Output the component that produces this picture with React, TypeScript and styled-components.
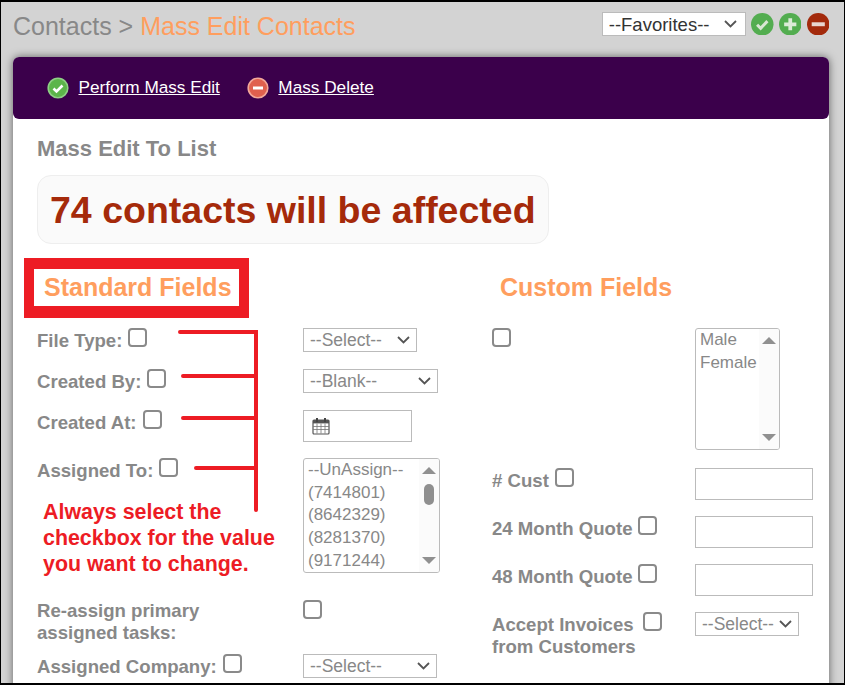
import {createGlobalStyle, styled} from "styled-components";

const chevron = "data:image/svg+xml;utf8,<svg xmlns='http://www.w3.org/2000/svg' width='13' height='8' viewBox='0 0 13 8'><path d='M1 1l5.5 5.5L12 1' fill='none' stroke='%23555' stroke-width='1.8'/></svg>";

const GlobalStyle = createGlobalStyle`
  html, body {
    margin: 0;
    padding: 0;
    height: 100%;
    overflow: hidden;
    background: #d3d3d3;
  }
  * {
    box-sizing: border-box;
  }
`;

const Frame = styled.div`
  width: 845px;
  height: 685px;
  border: solid #000;
  border-width: 2px 1px 2px 1px;
  background: #d3d3d3;
  overflow: hidden;
  font-family: "Liberation Sans", Arial, sans-serif;
  color: #888;
  position: relative;
`;

const TopBar = styled.div`
  height: 55px;
  padding: 8px 15px 0 12px;
  display: flex;
  align-items: flex-start;
  justify-content: space-between;
`;

const Crumb = styled.h1`
  margin: 0;
  font-size: 25px;
  line-height: 32px;
  font-weight: 400;
  color: #888;

  span {
    color: #ff9e5e;
  }
`;

const Favorites = styled.div`
  display: flex;
  align-items: center;
  gap: 5.25px;
  margin-top: 2px;
`;

const NativeSelect = styled.select<{$w: number}>`
  appearance: none;
  display: block;
  width: ${({$w}) => $w}px;
  height: 24px;
  font-family: "Liberation Sans", Arial, sans-serif;
  font-size: 17.5px;
  color: #888;
  background: #fff url("${chevron}") no-repeat right 6px center;
  border: 1px solid #bbb;
  border-radius: 0;
  padding: 0 0 0 6px;
  outline: none;
`;

const FavoritesSelect = styled(NativeSelect)`
  color: #333;
  font-size: 18.5px;
  background-position: right 8px center;
`;

const Card = styled.div`
  margin: 0 15px 0 12px;
  height: 640px;
  background: #fff;
  border-radius: 6px 6px 0 0;
  box-shadow: 0 0 8px rgba(0, 0, 0, 0.55);
`;

const ActionBar = styled.div`
  height: 62px;
  background: #3b004b;
  border-radius: 6px;
  display: flex;
  align-items: center;
  padding-left: 34px;
  gap: 27px;
`;

const Action = styled.a`
  display: flex;
  align-items: center;
  gap: 9.5px;
  color: #fff;
  font-size: 17.2px;
`;

const ActionLabel = styled.span`
  margin-bottom: 2px;
  text-decoration: underline;
`;

const Body = styled.div`
  padding: 18px 16px 0 24px;
`;

const SectionTitle = styled.h2`
  margin: 0;
  font-size: 22px;
  line-height: 24px;
  font-weight: 700;
  color: #888;
`;

const AffectedBox = styled.div`
  margin-top: 14px;
  width: 512px;
  height: 69px;
  border: 1px solid #eee;
  border-radius: 14px;
  background: #fafafa;
  padding-left: 12px;
  font-size: 37.5px;
  line-height: 68px;
  font-weight: 700;
  color: #a52a0a;
  white-space: nowrap;
`;

const Columns = styled.div`
  display: flex;
  margin-top: 28px;
`;

const LeftColumn = styled.div`
  width: 455px;
`;

const RightColumn = styled.div`
  flex: 1;
`;

const FieldsTitle = styled.h3`
  margin: 0 0 26px 7px;
  height: 30px;
  font-size: 25px;
  line-height: 30px;
  font-weight: 700;
  color: #ff9e5e;
`;

const RightTitle = styled(FieldsTitle)`
  margin-left: 8px;
`;

const Row = styled.div<{$h: number; $col: number}>`
  display: grid;
  grid-template-columns: ${({$col}) => $col}px 1fr;
  height: ${({$h}) => $h}px;
  align-items: start;
`;

const Label = styled.label`
  display: block;
  font-size: 18.6px;
  line-height: 22px;
  font-weight: 700;
  color: #888;
`;

const Check = styled.input.attrs({type: "checkbox"})<{$ml?: number}>`
  appearance: none;
  display: inline-block;
  width: 19px;
  height: 19px;
  margin: 0 0 0 ${({$ml}) => $ml ?? 6}px;
  border: 2px solid #8a8a8a;
  border-radius: 4px;
  background: #fff;
  vertical-align: 0;
`;

const TextInput = styled.input<{$w: number}>`
  display: block;
  width: ${({$w}) => $w}px;
  height: 32px;
  border: 1px solid #bbb;
  background: #fff;
  padding: 0;
  outline: none;
`;

const DateBox = styled.div`
  width: 109px;
  height: 32px;
  border: 1px solid #bbb;
  display: flex;
  align-items: center;
  padding-left: 8px;
`;

const ListBox = styled.div<{$w: number; $h: number}>`
  position: relative;
  width: ${({$w}) => $w}px;
  height: ${({$h}) => $h}px;
  border: 1px solid #bbb;
  border-radius: 3px;
  background: #fff;
  overflow: hidden;
  padding: 0 0 0 4px;
  font-size: 17px;
  line-height: 22.7px;
  color: #888;
`;

const Track = styled.div`
  position: absolute;
  top: 0;
  right: 0;
  bottom: 0;
  width: 20px;
  background: #fbfbfb;
  display: flex;
  flex-direction: column;
  align-items: center;
  padding: 8px 0 8px;
`;

const Thumb = styled.div`
  width: 10px;
  height: 21px;
  margin-top: 10px;
  border-radius: 5px;
  background: #8f8f8f;
`;

const ArrowUp = styled.div`
  width: 0;
  height: 0;
  border: 7px solid transparent;
  border-top: 0;
  border-bottom: 7px solid #909090;
`;

const ArrowDown = styled(ArrowUp)`
  margin-top: auto;
  border-bottom: 0;
  border-top: 7px solid #909090;
`;

const Annotations = styled.svg`
  position: absolute;
  left: -1px;
  top: -2px;
  pointer-events: none;
`;

const Highlight = styled.div`
  position: absolute;
  left: 23px;
  top: 256px;
  width: 225px;
  height: 60px;
  border: solid #ed1c24;
  border-width: 11px 10px 12px 10px;
  pointer-events: none;
`;

const Note = styled.div`
  position: absolute;
  left: 42px;
  top: 497px;
  font-size: 21.4px;
  line-height: 26px;
  font-weight: 700;
  color: #ed1c24;
`;

function RoundIcon({fill, kind}: {fill: string; kind: "check" | "plus" | "minus"}) {
    return (
        <svg width={22.5} height={22.5} viewBox="0 0 24 24">
            <circle cx="12" cy="12" r="12" fill={fill}/>
            {kind === "check" && <path d="M6.5 12.5l3.8 3.8 7.2-7.6" fill="none" stroke="#d9e6d4" strokeWidth="3.2"/>}
            {kind === "plus" && <path d="M12 5.5v13M5.5 12h13" fill="none" stroke="#dcebd8" strokeWidth="4"/>}
            {kind === "minus" && <path d="M5 12h14" fill="none" stroke="#e8d5cf" strokeWidth="4.2"/>}
        </svg>
    );
}

function GlossIcon({kind}: {kind: "check" | "minus"}) {
    const base = kind === "check" ? "#5cb54a" : "#e0604e";
    const edge = kind === "check" ? "#8fcf86" : "#f2a89a";
    return (
        <svg width={22} height={22} viewBox="0 0 22 22">
            <circle cx="11" cy="11" r="9.8" fill={base} stroke={edge} strokeWidth="1.6"/>
            {kind === "check"
                ? <path d="M6.5 11.5l3 3 6-6" fill="none" stroke="#fff" strokeWidth="2.6"/>
                : <path d="M6 11h10" fill="none" stroke="#fff" strokeWidth="3"/>}
        </svg>
    );
}

function CalendarIcon() {
    return (
        <svg width={18} height={18} viewBox="0 0 18 18">
            <rect x="1" y="3" width="16" height="14" rx="1" fill="#fff" stroke="#555" strokeWidth="1.2"/>
            <rect x="1" y="3" width="16" height="3.4" fill="#555"/>
            <path d="M1 9.5h16M1 12.5h16M5 6.5v10M9 6.5v10M13 6.5v10" stroke="#777" strokeWidth="0.8"/>
            <path d="M5 1v4M13 1v4" stroke="#444" strokeWidth="2"/>
        </svg>
    );
}

const assignees = ["--UnAssign--", "(7414801)", "(8642329)", "(8281370)", "(9171244)"];

export default function App() {
    return (
        <Frame>
            <GlobalStyle/>
            <TopBar>
                <Crumb>Contacts &gt; <span>Mass Edit Contacts</span></Crumb>
                <Favorites>
                    <FavoritesSelect $w={144}><option>--Favorites--</option></FavoritesSelect>
                    <RoundIcon fill="#53ad50" kind="check"/>
                    <RoundIcon fill="#53ad50" kind="plus"/>
                    <RoundIcon fill="#a32a0c" kind="minus"/>
                </Favorites>
            </TopBar>
            <Card>
                <ActionBar>
                    <Action><GlossIcon kind="check"/><ActionLabel>Perform Mass Edit</ActionLabel></Action>
                    <Action><GlossIcon kind="minus"/><ActionLabel>Mass Delete</ActionLabel></Action>
                </ActionBar>
                <Body>
                    <SectionTitle>Mass Edit To List</SectionTitle>
                    <AffectedBox>74 contacts will be affected</AffectedBox>
                    <Columns>
                        <LeftColumn>
                            <FieldsTitle>Standard Fields</FieldsTitle>
                            <Row $h={41} $col={266}>
                                <Label>File Type:<Check/></Label>
                                <NativeSelect $w={114}><option>--Select--</option></NativeSelect>
                            </Row>
                            <Row $h={41} $col={266}>
                                <Label>Created By:<Check/></Label>
                                <NativeSelect $w={135}><option>--Blank--</option></NativeSelect>
                            </Row>
                            <Row $h={48} $col={266}>
                                <Label>Created At:<Check/></Label>
                                <DateBox><CalendarIcon/></DateBox>
                            </Row>
                            <Row $h={142} $col={266}>
                                <Label>Assigned To:<Check/></Label>
                                <ListBox $w={137} $h={115}>
                                    {assignees.map(a => <div key={a}>{a}</div>)}
                                    <Track>
                                        <ArrowUp/>
                                        <Thumb/>
                                        <ArrowDown/>
                                    </Track>
                                </ListBox>
                            </Row>
                            <Row $h={54} $col={266}>
                                <Label>Re-assign primary<br/>assigned tasks:</Label>
                                <Check $ml={0}/>
                            </Row>
                            <Row $h={30} $col={266}>
                                <Label>Assigned Company:<Check/></Label>
                                <NativeSelect $w={134}><option>--Select--</option></NativeSelect>
                            </Row>
                        </LeftColumn>
                        <RightColumn>
                            <RightTitle>Custom Fields</RightTitle>
                            <Row $h={140} $col={203}>
                                <Check $ml={0}/>
                                <ListBox $w={85} $h={122}>
                                    <div>Male</div>
                                    <div>Female</div>
                                    <Track>
                                        <ArrowUp/>
                                        <ArrowDown/>
                                    </Track>
                                </ListBox>
                            </Row>
                            <Row $h={48} $col={203}>
                                <Label># Cust<Check/></Label>
                                <TextInput $w={118}/>
                            </Row>
                            <Row $h={48} $col={203}>
                                <Label>24 Month Quote<Check/></Label>
                                <TextInput $w={118}/>
                            </Row>
                            <Row $h={48} $col={203}>
                                <Label>48 Month Quote<Check/></Label>
                                <TextInput $w={118}/>
                            </Row>
                            <Row $h={48} $col={203}>
                                <Label>Accept Invoices<Check $ml={9}/><br/>from Customers</Label>
                                <NativeSelect $w={104}><option>--Select--</option></NativeSelect>
                            </Row>
                        </RightColumn>
                    </Columns>
                </Body>
            </Card>
            <Highlight/>
            <Annotations width={845} height={685}>
                <path d="M180 332H256V510M183 376H256M183 418H256M196 468H256" fill="none" stroke="#ed1c24" strokeWidth="4" strokeLinecap="round"/>
            </Annotations>
            <Note>Always select the<br/>checkbox for the value<br/>you want to change.</Note>
        </Frame>
    );
}
